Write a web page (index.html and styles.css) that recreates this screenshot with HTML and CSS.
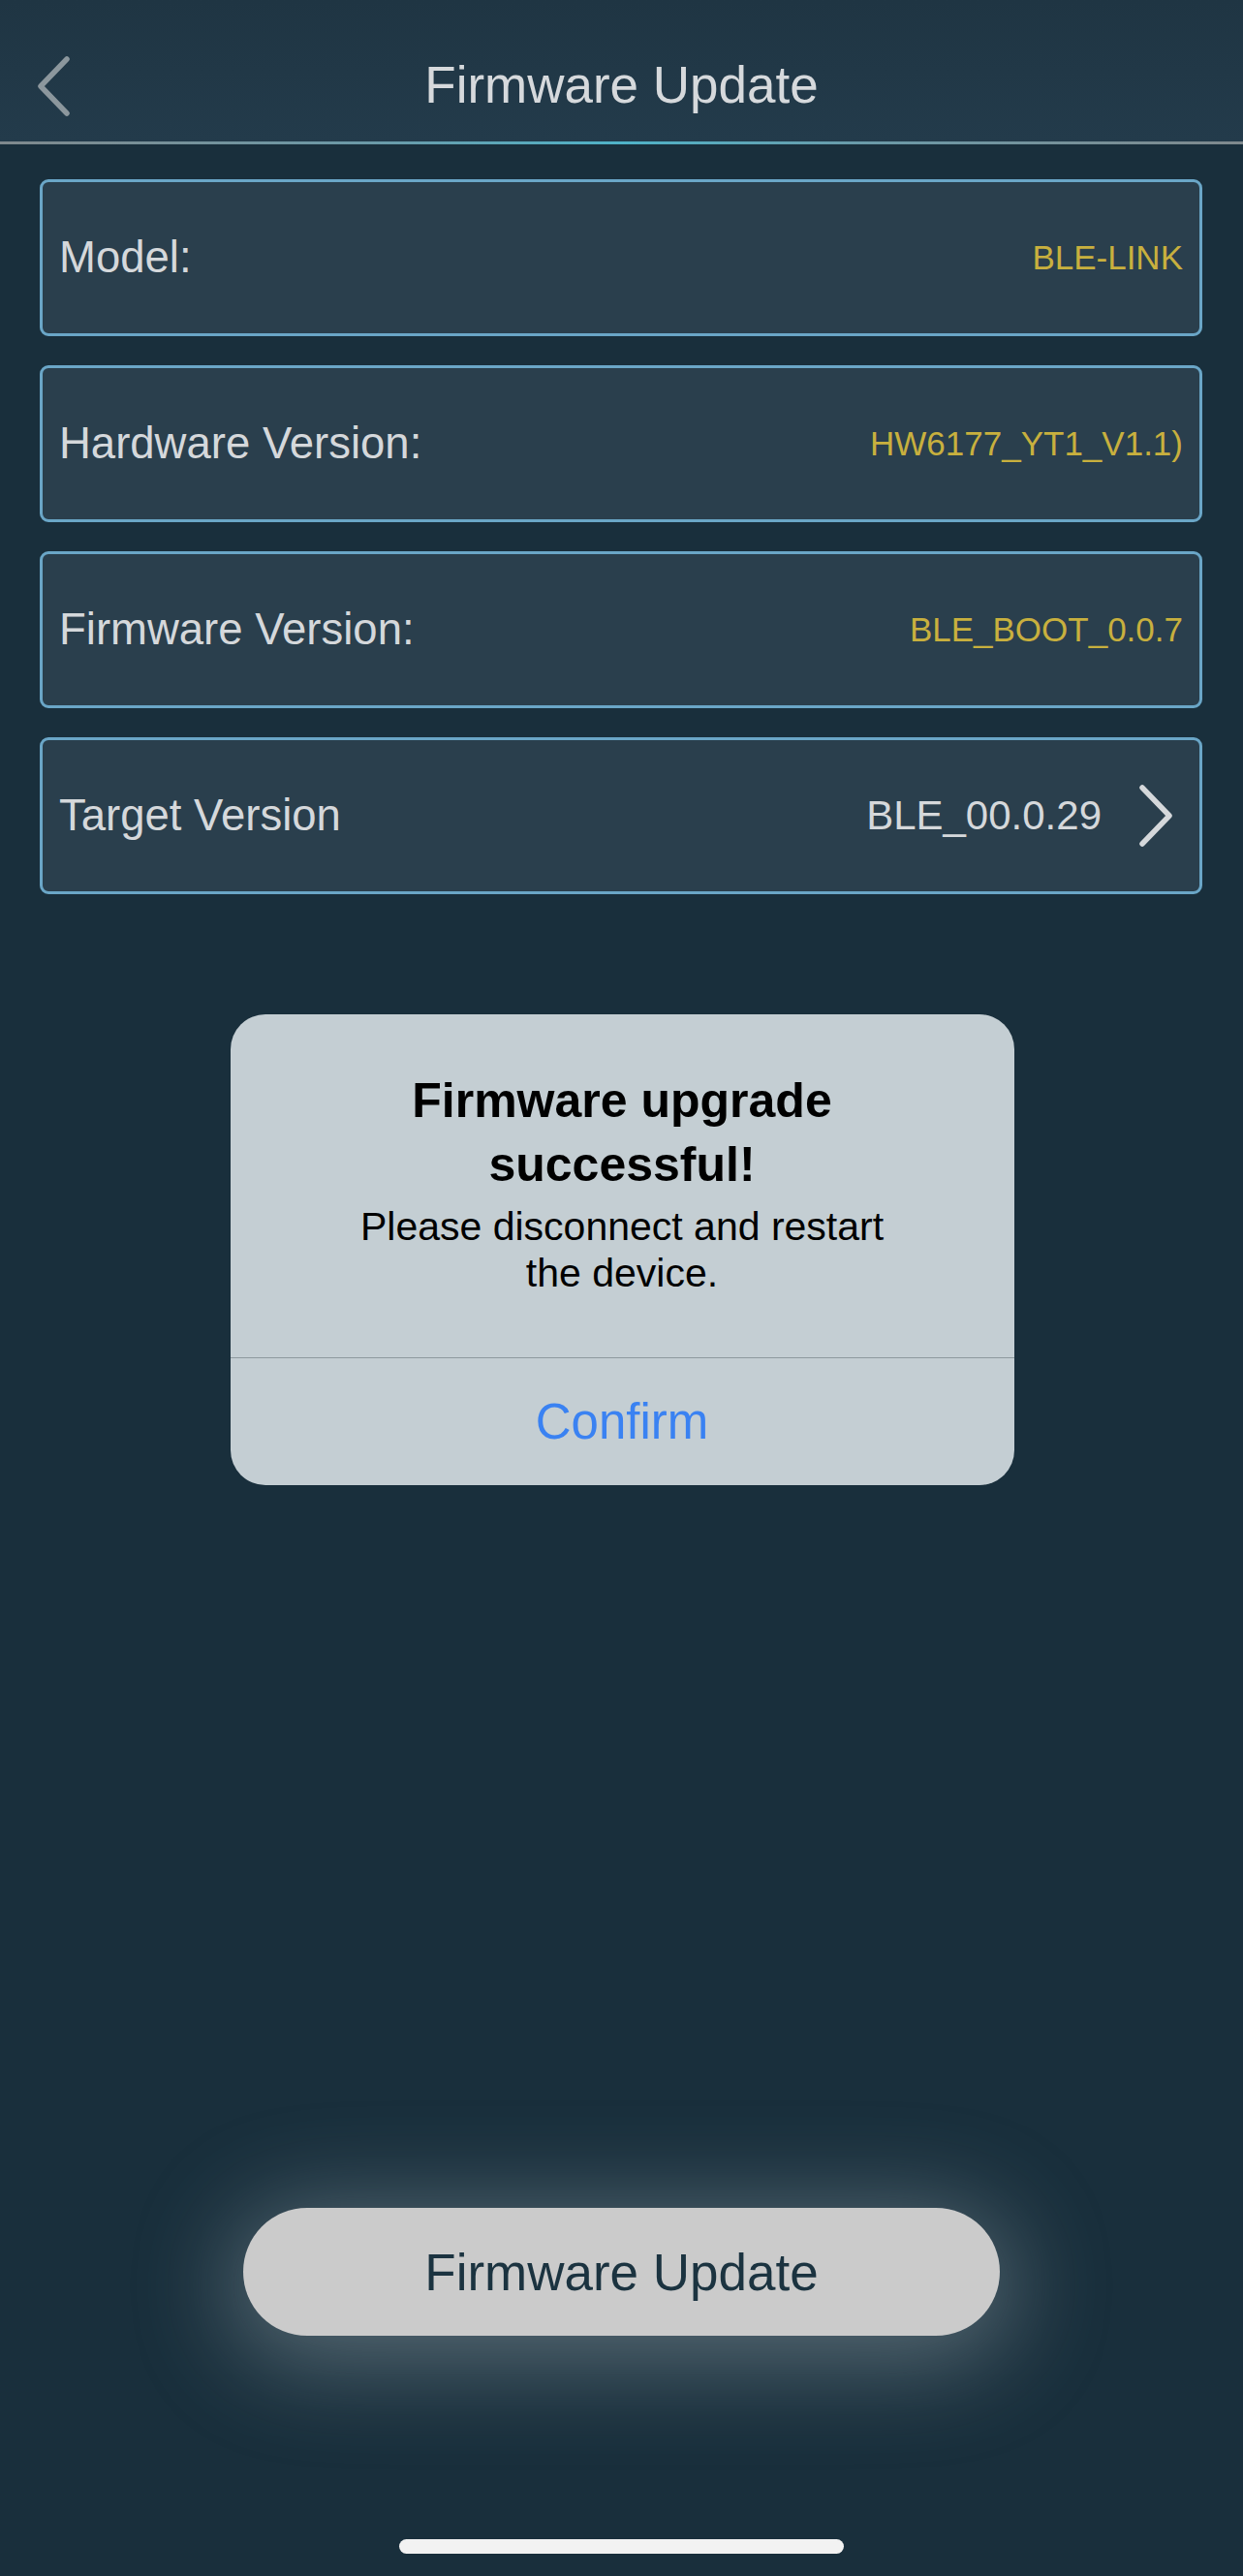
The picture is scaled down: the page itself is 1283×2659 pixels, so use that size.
FILE: index.html
```html
<!DOCTYPE html>
<html lang="en">
<head>
    <meta charset="UTF-8">
    <meta name="viewport" content="width=device-width, initial-scale=1.0">
    <title>Firmware Update</title>
    <link rel="stylesheet" href="styles.css">
</head>
<body>
<div class="screen">
    <div class="header">
        <svg class="back" width="40" height="62" viewBox="0 0 40 62">
            <polyline points="33,3 6,31 33,59" fill="none" stroke="#8c979d" stroke-width="5.5" stroke-linecap="round" stroke-linejoin="round"/>
        </svg>
        <div class="title">Firmware Update</div>
    </div>
    <div class="header-line"></div>

    <div class="list">
        <div class="card">
            <span class="label">Model:</span>
            <span class="value">BLE-LINK</span>
        </div>
        <div class="card">
            <span class="label">Hardware Version:</span>
            <span class="value">HW6177_YT1_V1.1)</span>
        </div>
        <div class="card">
            <span class="label">Firmware Version:</span>
            <span class="value">BLE_BOOT_0.0.7</span>
        </div>
        <div class="card card-link">
            <span class="label">Target Version</span>
            <span class="target">BLE_00.0.29</span>
            <svg class="next" width="36" height="64" viewBox="0 0 36 64">
                <polyline points="4,3 32,32 4,61" fill="none" stroke="#d5d8db" stroke-width="5.5" stroke-linecap="round" stroke-linejoin="round"/>
            </svg>
        </div>
    </div>

    <div class="spacer"></div>

    <div class="footer">
        <div class="update-btn">Firmware Update</div>
        <div class="home-bar"></div>
    </div>

    <div class="alert">
        <div class="alert-body">
            <div class="alert-title">Firmware upgrade<br>successful!</div>
            <div class="alert-msg">Please disconnect and restart<br>the device.</div>
        </div>
        <div class="alert-btn">Confirm</div>
    </div>
</div>
</body>
</html>
```

FILE: styles.css
```css
* {
    margin: 0;
    padding: 0;
    box-sizing: border-box;
}

body {
    background: #192f3c;
    font-family: "Liberation Sans", Arial, sans-serif;
}

.screen {
    position: relative;
    width: 1283px;
    height: 2659px;
    display: flex;
    flex-direction: column;
    background: #192f3c;
    overflow: hidden;
}

.header {
    height: 146px;
    padding-top: 28px;
    display: flex;
    align-items: center;
    justify-content: center;
    position: relative;
    background: linear-gradient(#1f3543, #233b4b);
}

.back {
    position: absolute;
    left: 36px;
    top: 58px;
}

.title {
    color: #d6d9dc;
    font-size: 53px;
}

.header-line {
    height: 3px;
    background: linear-gradient(to right, #7f898d 0%, #6b9aa8 30%, #4fb3c8 50%, #6b9aa8 70%, #7f898d 100%);
}

.list {
    display: flex;
    flex-direction: column;
    gap: 30px;
    padding: 36px 42px 0 41px;
}

.card {
    height: 162px;
    display: flex;
    align-items: center;
    justify-content: space-between;
    padding: 0 17px;
    background: #2a3f4d;
    border: 3px solid #6aa6c7;
    border-radius: 9px;
}

.label {
    color: #d5d8db;
    font-size: 45.5px;
}

.value {
    color: #c8b03e;
    font-size: 35px;
}

.card-link {
    padding-right: 27px;
}

.card-link .label {
    flex: 1;
}

.target {
    color: #d5d8db;
    font-size: 42px;
}

.next {
    margin-left: 38px;
}

.spacer {
    flex: 1;
}

.footer {
    display: flex;
    flex-direction: column;
    align-items: center;
    padding-bottom: 23px;
}

.update-btn {
    width: 781px;
    height: 132px;
    border-radius: 66px;
    background: #cbcbcb;
    color: #1b3340;
    font-size: 53px;
    display: flex;
    align-items: center;
    justify-content: center;
    box-shadow: 0 14px 100px 14px rgba(190, 202, 208, 0.38);
}

.home-bar {
    margin-top: 210px;
    width: 459px;
    height: 15px;
    border-radius: 8px;
    background: #f2f2f2;
}

.alert {
    position: absolute;
    top: 1047px;
    left: 50%;
    margin-left: -404px;
    width: 809px;
    border-radius: 36px;
    background: #c4ced3;
    text-align: center;
    color: #000;
}

.alert-body {
    padding: 56px 40px 63px;
}

.alert-title {
    font-size: 50px;
    font-weight: bold;
    line-height: 66px;
}

.alert-msg {
    margin-top: 7px;
    font-size: 41px;
    line-height: 48px;
}

.alert-btn {
    height: 132px;
    border-top: 1px solid #8e999f;
    color: #3a82f2;
    font-size: 51px;
    display: flex;
    align-items: center;
    justify-content: center;
}
```
